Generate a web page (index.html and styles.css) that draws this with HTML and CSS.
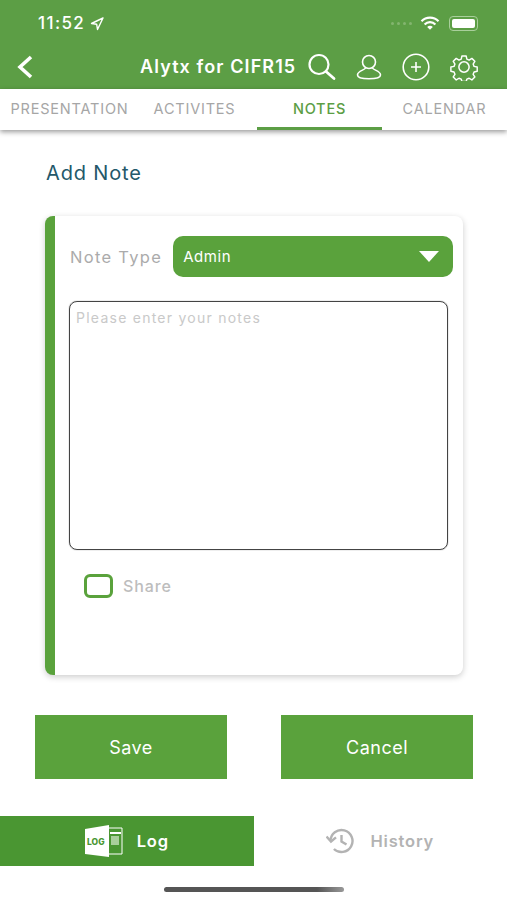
FILE: index.html
```html
<!DOCTYPE html>
<html lang="en">
<head>
    <meta charset="utf-8">
    <meta name="viewport" content="width=device-width, initial-scale=1">
    <title>Add Note</title>
    <link rel="stylesheet" href="styles.css">
</head>
<body>
<div class="app">
    <header class="top">
        <div class="status">
            <span class="time">11:52</span>
            <svg class="loc" width="14" height="14" viewBox="0 0 14 14"><path d="M13 1 1.500 6.500l5.200.8.8 5.200z" fill="none" stroke="#fff" stroke-width="1.400" stroke-linejoin="round"/></svg>
            <span class="status-right">
                <span class="dots"><i></i><i></i><i></i><i></i></span>
                <svg width="20" height="15" viewBox="0 0 20 15"><path d="M1.500 5.200a12 12 0 0 1 17 0M4.600 8.400a7.600 7.600 0 0 1 10.800 0" fill="none" stroke="#fff" stroke-width="2.200"/><path d="M7.200 11a3.900 3.900 0 0 1 5.600 0L10 13.800z" fill="#fff"/></svg>
                <span class="battery"><b></b></span>
            </span>
        </div>
        <div class="nav">
            <svg class="back" width="18" height="24" viewBox="0 0 18 24"><path d="M15 2 4 12l11 10" fill="none" stroke="#fff" stroke-width="3.600"/></svg>
            <span class="title">Alytx for CIFR15</span>
            <div class="nav-icons">
                <svg width="29" height="28" viewBox="0 0 29 28"><circle cx="12" cy="11.500" r="9.500" fill="none" stroke="#fff" stroke-width="2.200"/><path d="m19 18.500 8 7" stroke="#fff" stroke-width="2.800" stroke-linecap="round"/></svg>
                <svg width="26" height="26" viewBox="0 0 26 26"><circle cx="13" cy="8" r="6.500" fill="none" stroke="#fff" stroke-width="1.600"/><path d="M9.500 13.500c.5 2.500-8 3-8 7.500 0 2.500 3.500 3.700 11.500 3.700s11.500-1.200 11.500-3.700c0-4.500-8.500-5-8-7.500" fill="none" stroke="#fff" stroke-width="1.600"/></svg>
                <svg width="28" height="28" viewBox="0 0 28 28"><circle cx="14" cy="14" r="12.800" fill="none" stroke="#fff" stroke-width="1.600"/><path d="M14 9v10M9 14h10" stroke="#fff" stroke-width="1.600"/></svg>
                <svg width="28" height="28" viewBox="0 0 30 30"><circle cx="15" cy="15" r="5.500" fill="none" stroke="#fff" stroke-width="1.600"/><path d="M12.500 2h5l.8 3.700 2.700 1.100 3.200-2 3.500 3.500-2 3.200 1.100 2.700 3.700.8v5l-3.700.8-1.100 2.700 2 3.200-3.500 3.500-3.200-2-2.700 1.100-.8 2.700h-5l-.8-2.700-2.700-1.100-3.200 2-3.500-3.500 2-3.200-1.100-2.700-3.700-.8v-5l3.700-.8 1.100-2.700-2-3.200 3.500-3.500 3.200 2 2.700-1.100z" transform="translate(1.400 1.400) scale(.91)" fill="none" stroke="#fff" stroke-width="1.700" stroke-linejoin="round"/></svg>
            </div>
        </div>
    </header>

    <nav class="tabs">
        <a class="tab">PRESENTATION</a>
        <a class="tab">ACTIVITES</a>
        <a class="tab active">NOTES</a>
        <a class="tab">CALENDAR</a>
    </nav>

    <main class="content">
        <h1 class="heading">Add Note</h1>
        <section class="card">
            <div class="type-row">
                <span class="type-label">Note Type</span>
                <div class="select">
                    <span>Admin</span>
                    <i class="arrow"></i>
                </div>
            </div>
            <div class="notes">Please enter your notes</div>
            <div class="share">
                <span class="checkbox"></span>
                <span class="share-label">Share</span>
            </div>
        </section>
        <div class="buttons">
            <button class="btn">Save</button>
            <button class="btn">Cancel</button>
        </div>
    </main>

    <footer class="bottom">
        <div class="bottom-tab selected">
            <svg width="38" height="32" viewBox="0 0 38 32">
                <path d="M0 4 24 0v32L0 29z" fill="#fff"/>
                <path d="M24 3h13v26H24" fill="none" stroke="#fff" stroke-width="1"/>
                <path d="M25 7h11v2H25z" fill="#fff"/>
                <path d="M26 11h8v9h-8z" fill="#a9cf9b"/>
                <text x="2" y="19.500" class="log-text">LOG</text>
            </svg>
            <span>Log</span>
        </div>
        <div class="bottom-tab">
            <svg width="30" height="26" viewBox="0 0 30 26"><path d="M4.500 13a11 11 0 1 1 3.400 8" fill="none" stroke="#b3b3b3" stroke-width="2.400"/><path d="m.5 8.500 4.500 5 5-4.200" fill="none" stroke="#b3b3b3" stroke-width="2.400"/><path d="M15.500 7v6.500l5 3" fill="none" stroke="#b3b3b3" stroke-width="2.400"/></svg>
            <span>History</span>
        </div>
    </footer>
    <div class="home-wrap"><div class="home-bar"></div></div>
</div>
</body>
</html>
```

FILE: styles.css
```css
* {
    box-sizing: border-box;
}

body {
    margin: 0;
    background-color: #fff;
    font-family: Inter, "Open Sans", sans-serif;
}

.app {
    width: 507px;
    height: 900px;
    overflow: hidden;
    display: flex;
    flex-direction: column;
}

.top {
    height: 89px;
    background-color: #5c9e45;
    color: #fff;
}

.status {
    height: 46px;
    padding: 14px 29px 0 38px;
    display: flex;
    align-items: flex-start;
}

.time {
    font-size: 17px;
    line-height: 19px;
    font-weight: 500;
    letter-spacing: 1.4px;
}

.loc {
    margin: 3px 0 0 5px;
}

.status-right {
    margin-left: auto;
    display: flex;
    align-items: center;
    height: 19px;
}

.dots {
    display: flex;
    gap: 3px;
    margin-right: 8px;
}

.dots i {
    width: 3px;
    height: 3px;
    border-radius: 50%;
    background-color: #83b56f;
}

.battery {
    width: 29px;
    height: 15px;
    margin-left: 9px;
    padding: 2px;
    border: 1px solid #a9cf9b;
    border-radius: 4px;
}

.battery b {
    display: block;
    height: 100%;
    background-color: #fff;
    border-radius: 2px;
}

.nav {
    height: 43px;
    padding: 7px 29px 0 16px;
    display: flex;
    align-items: flex-start;
}

.back {
    margin-top: 2px;
}

.title {
    margin-left: 106px;
    font-size: 18px;
    line-height: 28px;
    font-weight: 600;
    letter-spacing: 1.1px;
    white-space: nowrap;
}

.nav-icons {
    margin-left: auto;
    display: flex;
    align-items: center;
    gap: 20px;
}

.tabs {
    height: 41px;
    padding-left: 7px;
    display: flex;
    background-color: #fff;
    box-shadow: 0 2px 5px rgba(0, 0, 0, 0.4);
    position: relative;
}

.tab {
    width: 125px;
    padding-top: 12px;
    text-align: center;
    font-size: 14.5px;
    line-height: 16px;
    letter-spacing: 0.8px;
    color: #a6a6a6;
    white-space: nowrap;
}

.tab.active {
    color: #5c9e45;
    font-weight: 500;
    border-bottom: 3px solid #5c9e45;
}

.content {
    flex: 1;
    padding: 0 34px 0 35px;
}

.heading {
    margin: 32px 0 31px 11px;
    font-size: 20px;
    line-height: 23px;
    font-weight: 400;
    letter-spacing: 0.85px;
    color: #24586a;
}

.card {
    margin: 0 10px;
    height: 459px;
    padding: 20px 15px 0 15px;
    background-color: #fff;
    border-left: 10px solid #5aa23c;
    border-radius: 8px;
    box-shadow: 0 2px 6px rgba(0, 0, 0, 0.2);
}

.type-row {
    display: flex;
    align-items: center;
    gap: 11px;
    margin-right: -5px;
}

.type-label {
    font-size: 16.5px;
    letter-spacing: 1.3px;
    color: #ababab;
    white-space: nowrap;
}

.select {
    flex: 1;
    height: 41px;
    padding: 0 14px 0 10px;
    display: flex;
    align-items: center;
    justify-content: space-between;
    background-color: #5aa23c;
    border-radius: 10px;
    color: #fff;
    font-size: 15px;
    letter-spacing: 0.6px;
}

.arrow {
    width: 0;
    height: 0;
    border-left: 10px solid transparent;
    border-right: 10px solid transparent;
    border-top: 11px solid #fff;
}

.notes {
    height: 249px;
    margin-top: 24px;
    margin-left: -1px;
    padding: 7px 6px;
    border: 1px solid #444;
    border-radius: 8px;
    box-shadow: 0 0 1px #555;
    font-size: 14px;
    line-height: 17px;
    letter-spacing: 1.25px;
    color: #c9c9c9;
}

.share {
    margin: 24px 0 0 14px;
    display: flex;
    align-items: center;
    gap: 10px;
}

.checkbox {
    width: 29px;
    height: 24px;
    border: 3px solid #5aa23c;
    border-radius: 6px;
}

.share-label {
    font-size: 16px;
    font-weight: 500;
    letter-spacing: 0.9px;
    color: #bdbdbd;
}

.buttons {
    margin-top: 40px;
    display: flex;
    justify-content: space-between;
}

.btn {
    width: 192px;
    height: 64px;
    border: 0;
    background-color: #5aa23c;
    color: #fff;
    font-family: inherit;
    font-size: 18px;
    letter-spacing: 0.5px;
}

.bottom {
    height: 50px;
    margin-bottom: 21px;
    display: flex;
}

.bottom-tab {
    width: 253.5px;
    display: flex;
    align-items: center;
    justify-content: center;
    gap: 14px;
    font-size: 16.5px;
    font-weight: 600;
    letter-spacing: 0.8px;
    color: #b3b3b3;
}

.bottom-tab.selected {
    background-color: #4a9632;
    color: #fff;
}

.log-text {
    font-family: Inter, sans-serif;
    font-size: 8.5px;
    font-weight: 800;
    letter-spacing: 0;
    fill: #4a9632;
}

.home-wrap {
    padding-bottom: 8px;
    display: flex;
    justify-content: center;
}

.home-bar {
    width: 180px;
    height: 5px;
    border-radius: 3px;
    background: linear-gradient(to right, #555 85%, #999);
}
```
